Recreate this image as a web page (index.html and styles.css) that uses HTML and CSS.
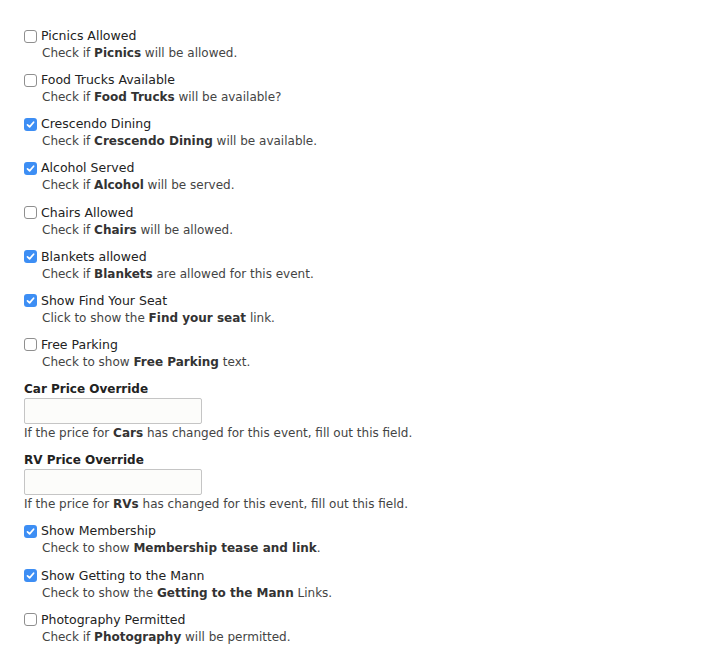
FILE: index.html
```html
<!DOCTYPE html>
<html>
<head>
<meta charset="utf-8">
<link rel="stylesheet" href="styles.css">
</head>
<body>
<form class="form">
  <div class="item">
    <label class="opt"><span class="cb"></span>Picnics Allowed</label>
    <div class="desc">Check if <b>Picnics</b> will be allowed.</div>
  </div>
  <div class="item">
    <label class="opt"><span class="cb"></span>Food Trucks Available</label>
    <div class="desc">Check if <b>Food Trucks</b> will be available?</div>
  </div>
  <div class="item">
    <label class="opt"><span class="cb on"><svg viewBox="0 0 13 13" width="13" height="13"><path d="M3.5 6.8 L5.6 8.9 L9.6 4.2" fill="none" stroke="#fff" stroke-width="1.7" stroke-linecap="round" stroke-linejoin="round"/></svg></span>Crescendo Dining</label>
    <div class="desc">Check if <b>Crescendo Dining</b> will be available.</div>
  </div>
  <div class="item">
    <label class="opt"><span class="cb on"><svg viewBox="0 0 13 13" width="13" height="13"><path d="M3.5 6.8 L5.6 8.9 L9.6 4.2" fill="none" stroke="#fff" stroke-width="1.7" stroke-linecap="round" stroke-linejoin="round"/></svg></span>Alcohol Served</label>
    <div class="desc">Check if <b>Alcohol</b> will be served.</div>
  </div>
  <div class="item">
    <label class="opt"><span class="cb"></span>Chairs Allowed</label>
    <div class="desc">Check if <b>Chairs</b> will be allowed.</div>
  </div>
  <div class="item">
    <label class="opt"><span class="cb on"><svg viewBox="0 0 13 13" width="13" height="13"><path d="M3.5 6.8 L5.6 8.9 L9.6 4.2" fill="none" stroke="#fff" stroke-width="1.7" stroke-linecap="round" stroke-linejoin="round"/></svg></span>Blankets allowed</label>
    <div class="desc">Check if <b>Blankets</b> are allowed for this event.</div>
  </div>
  <div class="item">
    <label class="opt"><span class="cb on"><svg viewBox="0 0 13 13" width="13" height="13"><path d="M3.5 6.8 L5.6 8.9 L9.6 4.2" fill="none" stroke="#fff" stroke-width="1.7" stroke-linecap="round" stroke-linejoin="round"/></svg></span>Show Find Your Seat</label>
    <div class="desc">Click to show the <b>Find your seat</b> link.</div>
  </div>
  <div class="item">
    <label class="opt"><span class="cb"></span>Free Parking</label>
    <div class="desc">Check to show <b>Free Parking</b> text.</div>
  </div>
  <div class="item">
    <label class="field-label">Car Price Override</label>
    <input class="text" type="text">
    <div class="desc plain">If the price for <b>Cars</b> has changed for this event, fill out this field.</div>
  </div>
  <div class="item">
    <label class="field-label">RV Price Override</label>
    <input class="text" type="text">
    <div class="desc plain">If the price for <b>RVs</b> has changed for this event, fill out this field.</div>
  </div>
  <div class="item">
    <label class="opt"><span class="cb on"><svg viewBox="0 0 13 13" width="13" height="13"><path d="M3.5 6.8 L5.6 8.9 L9.6 4.2" fill="none" stroke="#fff" stroke-width="1.7" stroke-linecap="round" stroke-linejoin="round"/></svg></span>Show Membership</label>
    <div class="desc">Check to show <b>Membership tease and link</b>.</div>
  </div>
  <div class="item">
    <label class="opt"><span class="cb on"><svg viewBox="0 0 13 13" width="13" height="13"><path d="M3.5 6.8 L5.6 8.9 L9.6 4.2" fill="none" stroke="#fff" stroke-width="1.7" stroke-linecap="round" stroke-linejoin="round"/></svg></span>Show Getting to the Mann</label>
    <div class="desc">Check to show the <b>Getting to the Mann</b> Links.</div>
  </div>
  <div class="item">
    <label class="opt"><span class="cb"></span>Photography Permitted</label>
    <div class="desc">Check if <b>Photography</b> will be permitted.</div>
  </div>
</form>
</body>
</html>
```

FILE: styles.css
```css
html, body {
  margin: 0;
  padding: 0;
  background: #fff;
}
body {
  font-family: "DejaVu Sans", Verdana, sans-serif;
  font-size: 12px;
  color: #333;
}
.form {
  padding: 27px 0 0 24px;
}
.item {
  display: flex;
  flex-direction: column;
  align-items: flex-start;
  margin-bottom: 9.15px;
}
.opt {
  display: flex;
  align-items: center;
  height: 18px;
  line-height: 18px;
  font-size: 12.5px;
  color: #222;
}
.cb {
  box-sizing: border-box;
  width: 13px;
  height: 13px;
  border: 1px solid #8f8f8f;
  border-radius: 3px;
  background: #fff;
  margin-right: 4px;
  display: inline-flex;
}
.cb.on {
  border: none;
  background: #3d8ef4;
}
.cb svg {
  display: block;
}
.desc {
  line-height: 17px;
  height: 17px;
  margin-left: 18px;
  color: #444;
  white-space: nowrap;
}
.desc b {
  font-weight: bold;
  color: #333;
}
.desc.plain {
  margin-left: 0;
}
.field-label {
  font-weight: bold;
  line-height: 18px;
  height: 18px;
  color: #222;
}
.text {
  box-sizing: border-box;
  width: 178px;
  height: 26px;
  margin: 0 0 1px 0;
  border: 1px solid #c5c5c5;
  border-radius: 2px;
  background: #fcfcfa;
  padding: 0;
}
```
